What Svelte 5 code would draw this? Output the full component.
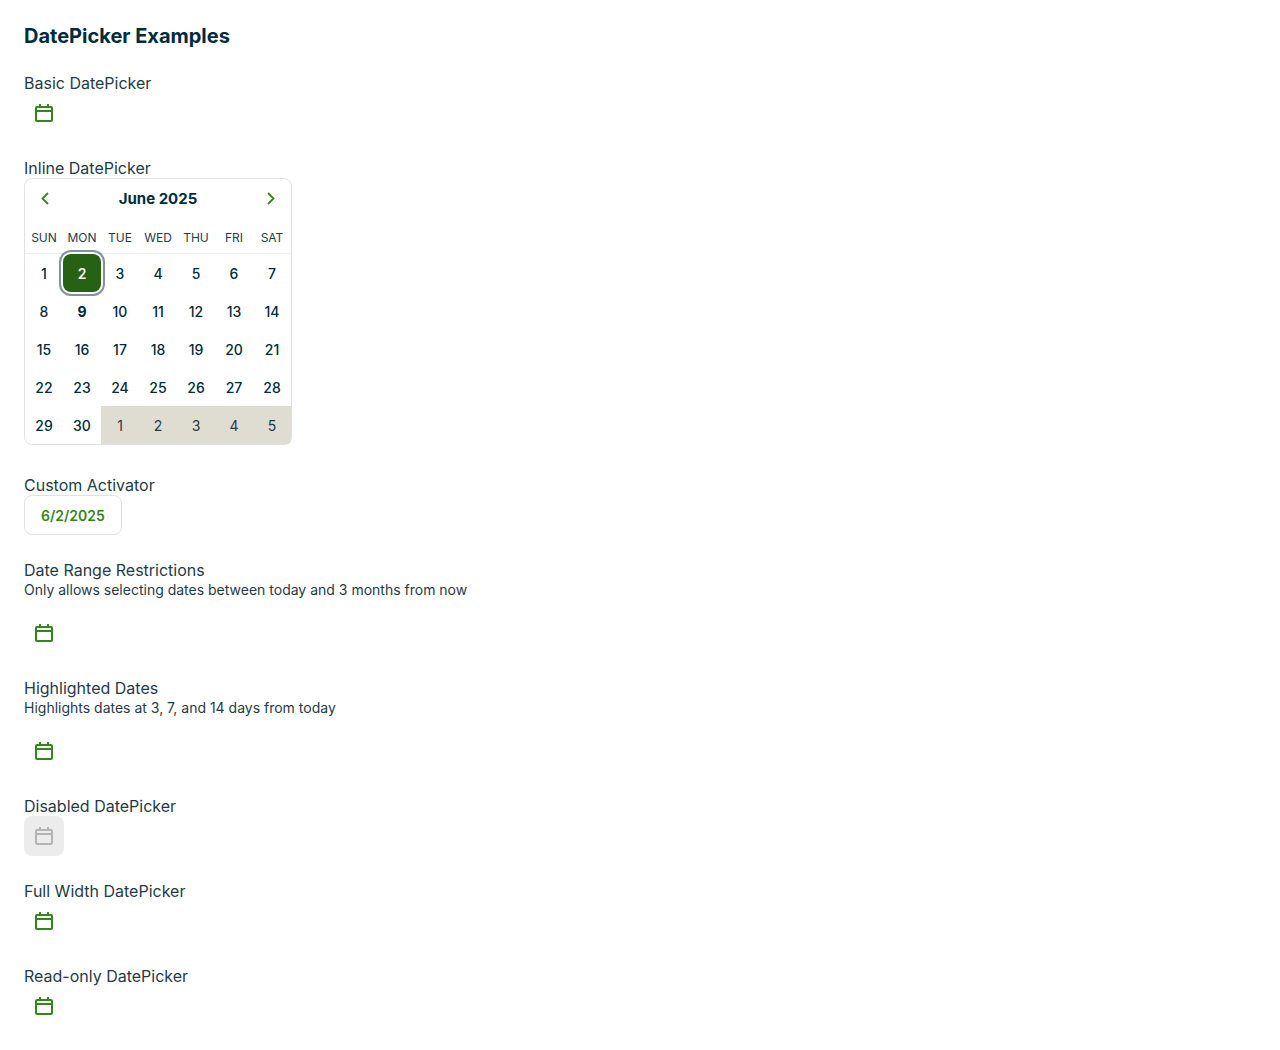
<script>
  const weekdays = ['SUN', 'MON', 'TUE', 'WED', 'THU', 'FRI', 'SAT'];
  const weeks = Array.from({ length: 5 }, (_, w) =>
    Array.from({ length: 7 }, (_, d) => {
      const n = w * 7 + d + 1;
      return { day: n > 30 ? n - 30 : n, outside: n > 30, today: n === 9, key: n };
    })
  );
  let selected = $state(2);
</script>

{#snippet calendarButton(id, disabled = false)}
  <button class="icon-button" type="button" aria-labelledby={id} {disabled}>
    <svg width="24" height="24" viewBox="0 0 24 24" fill="none" aria-hidden="true">
      <rect x="4" y="6" width="16" height="14" rx="1" stroke="currentColor" stroke-width="2" />
      <path d="M4 10h16M8 3v3M16 3v3" stroke="currentColor" stroke-width="2" />
    </svg>
  </button>
{/snippet}

<main>
  <h1>DatePicker Examples</h1>

  <section>
    <h2 id="basic">Basic DatePicker</h2>
    {@render calendarButton('basic')}
  </section>

  <section class="inline-section">
    <h2 id="inline">Inline DatePicker</h2>
    <div class="calendar">
      <div class="calendar-header">
        <button class="nav" type="button" aria-label="Previous month">
          <svg width="24" height="24" viewBox="0 0 24 24" fill="none" aria-hidden="true">
            <path d="M15 6 9.500 11.500 15 17" stroke="currentColor" stroke-width="1.800" />
          </svg>
        </button>
        <h3>June 2025</h3>
        <button class="nav" type="button" aria-label="Next month">
          <svg width="24" height="24" viewBox="0 0 24 24" fill="none" aria-hidden="true">
            <path d="M9 6l5.500 5.500L9 17" stroke="currentColor" stroke-width="1.800" />
          </svg>
        </button>
      </div>
      <table aria-labelledby="inline">
        <thead>
          <tr>
            {#each weekdays as name}
              <th scope="col">{name}</th>
            {/each}
          </tr>
        </thead>
        <tbody>
          {#each weeks as week}
            <tr>
              {#each week as cell (cell.key)}
                <td class:outside={cell.outside}>
                  <button
                    type="button"
                    class="day"
                    class:today={cell.today}
                    class:selected={selected === cell.key}
                    onclick={() => (selected = cell.key)}>{cell.day}</button>
                </td>
              {/each}
            </tr>
          {/each}
        </tbody>
      </table>
    </div>
  </section>

  <section>
    <h2>Custom Activator</h2>
    <button class="activator" type="button">6/2/2025</button>
  </section>

  <section>
    <h2 id="range">Date Range Restrictions</h2>
    <p>Only allows selecting dates between today and 3 months from now</p>
    {@render calendarButton('range')}
  </section>

  <section>
    <h2 id="highlighted">Highlighted Dates</h2>
    <p>Highlights dates at 3, 7, and 14 days from today</p>
    {@render calendarButton('highlighted')}
  </section>

  <section>
    <h2 id="disabled">Disabled DatePicker</h2>
    {@render calendarButton('disabled', true)}
  </section>

  <section>
    <h2 id="full">Full Width DatePicker</h2>
    {@render calendarButton('full')}
  </section>

  <section>
    <h2 id="readonly">Read-only DatePicker</h2>
    {@render calendarButton('readonly')}
  </section>
</main>

<style>
  :global(body) {
    background: #fff;
  }
  main {
    display: flex;
    flex-direction: column;
    gap: 25px;
    padding: 24px 24px 0;
    font-family: Inter, 'Liberation Sans', sans-serif;
    color: #002c3a;
  }
  h1,
  h2,
  h3,
  p {
    margin: 0;
  }
  h1 {
    font-size: 20px;
    line-height: 24px;
    font-weight: 700;
  }
  section {
    display: flex;
    flex-direction: column;
    align-items: flex-start;
  }
  .inline-section {
    padding-bottom: 5px;
  }
  h2 {
    font-size: 16px;
    line-height: 20px;
    font-weight: 400;
    color: #1f3b47;
  }
  p {
    margin-bottom: 14px;
    font-size: 14px;
    line-height: 19px;
    color: #1f3b47;
  }
  button {
    box-sizing: border-box;
    padding: 0;
    border: 0;
    background: none;
    font: inherit;
    color: #318717;
    cursor: pointer;
  }
  button:disabled {
    background: #ececec;
    color: #b4b4b4;
    cursor: default;
  }
  svg {
    display: block;
  }
  .icon-button {
    display: grid;
    place-items: center;
    width: 40px;
    height: 40px;
    border-radius: 8px;
  }
  .activator {
    height: 40px;
    padding: 0 16px;
    border: 1px solid #dfe3e6;
    border-radius: 8px;
    font-size: 14px;
    font-weight: 600;
  }
  .calendar {
    border: 1px solid #dfe3e6;
    border-radius: 8px;
  }
  .calendar-header {
    display: flex;
    align-items: center;
    justify-content: space-between;
    height: 40px;
  }
  .nav {
    display: grid;
    place-items: center;
    width: 40px;
    height: 40px;
  }
  h3 {
    font-size: 15px;
    line-height: 24px;
    font-weight: 700;
  }
  table {
    table-layout: fixed;
    width: 266px;
    border-collapse: separate;
    border-spacing: 0;
  }
  th {
    height: 35px;
    box-sizing: border-box;
    padding: 3px 0 0;
    border-bottom: 1px solid #edeff0;
    font-size: 12px;
    font-weight: 400;
    color: #1f3b47;
  }
  td {
    padding: 0;
  }
  .day {
    display: block;
    width: 100%;
    height: 38px;
    border-radius: 8px;
    font-size: 14px;
    font-weight: 500;
    color: #002c3a;
  }
  .outside {
    background: #dfdcd1;
  }
  .outside .day {
    font-weight: 400;
    color: #1f3b47;
  }
  .outside:last-child {
    border-bottom-right-radius: 4px;
  }
  .day.today {
    font-weight: 700;
  }
  .day.selected {
    background: #276114;
    color: #fff;
    font-weight: 600;
    box-shadow:
      0 0 0 2px #fff,
      0 0 0 4px #80929b;
  }
</style>
